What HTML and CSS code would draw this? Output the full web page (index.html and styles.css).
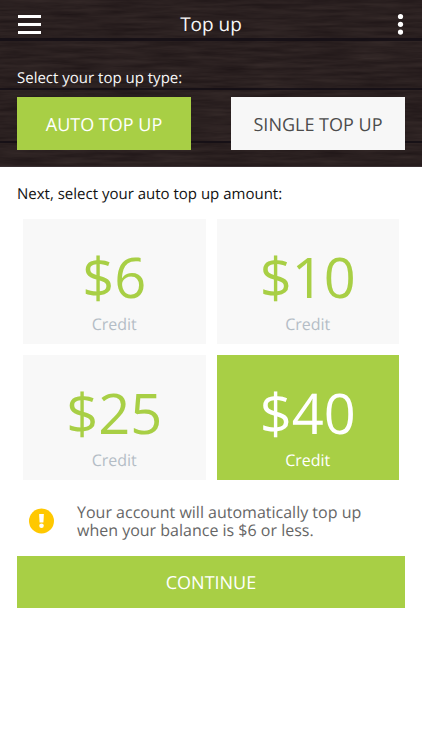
FILE: index.html
```html
<!DOCTYPE html>
<html lang="en">
<head>
<meta charset="utf-8">
<meta name="viewport" content="width=device-width, initial-scale=1">
<title>Top up</title>
<link rel="stylesheet" href="styles.css">
</head>
<body>
<header class="hero">
  <svg class="wood" aria-hidden="true" preserveAspectRatio="none">
    <filter id="grain" x="0" y="0" width="100%" height="100%" color-interpolation-filters="sRGB">
      <feTurbulence type="fractalNoise" baseFrequency="0.02 0.25" numOctaves="4" seed="8"/>
      <feColorMatrix type="matrix" values="0.1 0 0 0 0.115  0.09 0 0 0 0.08  0.08 0 0 0 0.085  0 0 0 0 1"/>
    </filter>
    <rect width="100%" height="100%" filter="url(#grain)"/>
    <g class="seams">
      <rect y="38" width="100%" height="3"/>
      <rect y="88" width="100%" height="2"/>
      <rect y="141" width="100%" height="2"/>
    </g>
  </svg>
  <div class="bar">
    <button class="icon-button" type="button" aria-label="Menu">
      <svg width="24" height="20" viewBox="0 0 24 20" fill="#fff"><path d="M1 1h23v3H1zM1 9h23v3H1zM1 17h23v3H1z"/></svg>
    </button>
    <h1 class="title">Top up</h1>
    <button class="icon-button more" type="button" aria-label="More options">
      <svg width="8" height="22" viewBox="0 0 8 22" fill="#fff"><circle cx="3.500" cy="3.500" r="2.600"/><circle cx="3.500" cy="11.300" r="2.600"/><circle cx="3.500" cy="19.100" r="2.600"/></svg>
    </button>
  </div>
  <p class="label">Select your top up type:</p>
  <div class="types">
    <button class="button selected" type="button" aria-pressed="true">AUTO TOP UP</button>
    <button class="button" type="button" aria-pressed="false">SINGLE TOP UP</button>
  </div>
</header>
<main class="content">
  <p class="label">Next, select your auto top up amount:</p>
  <div class="amounts">
    <button class="amount" type="button" aria-pressed="false"><span class="value">$6</span><span class="unit">Credit</span></button>
    <button class="amount" type="button" aria-pressed="false"><span class="value">$10</span><span class="unit">Credit</span></button>
    <button class="amount" type="button" aria-pressed="false"><span class="value">$25</span><span class="unit">Credit</span></button>
    <button class="amount selected" type="button" aria-pressed="true"><span class="value">$40</span><span class="unit">Credit</span></button>
  </div>
  <div class="notice">
    <svg class="notice-icon" width="26" height="26" viewBox="0 0 26 26" aria-hidden="true"><circle cx="13.500" cy="13" r="12.500" fill="#ffc800"/><path d="M11.100 6h4.800l-.5 8.500h-3.800z" fill="#fff"/><circle cx="13.500" cy="17.800" r="2.300" fill="#fff"/></svg>
    <p class="notice-text">Your account will automatically top up when your balance is $6 or less.</p>
  </div>
  <button class="button selected continue" type="button">CONTINUE</button>
</main>
</body>
</html>
```
FILE: styles.css
```css
* {
  box-sizing: border-box;
}

body {
  margin: 0;
  background: #fff;
  color: #111;
  font-family: "Open Sans", "Noto Sans", sans-serif;
  text-rendering: geometricPrecision;
}

button {
  border: 0;
  padding: 0;
  font: inherit;
  text-rendering: inherit;
  cursor: pointer;
}

h1,
p {
  margin: 0;
}

.hero {
  position: relative;
  isolation: isolate;
  padding: 0 17px 16px;
  border-bottom: 1px solid #3a3033;
  background: #2a1f20;
  color: #f7f7f7;
}

.wood {
  position: absolute;
  inset: 0;
  z-index: -1;
  width: 100%;
  height: 100%;
}

.seams {
  fill: #120d14;
  opacity: 0.8;
}

.bar {
  display: grid;
  grid-template-columns: 24px 1fr 24px;
  align-items: center;
  height: 48px;
}

.icon-button {
  display: flex;
  background: none;
}

.more {
  justify-content: center;
  padding-left: 15px;
}

.title {
  font-size: 19px;
  font-weight: 400;
  line-height: 24px;
  text-align: center;
}

.label {
  font-size: 15px;
  line-height: 20px;
}

.hero .label {
  margin: 20px 0 9px;
}

.types {
  display: grid;
  grid-template-columns: 1fr 1fr;
  gap: 40px;
}

.button {
  height: 53px;
  padding-top: 2px;
  background: #f7f7f7;
  color: #4c4c4c;
  font-size: 18px;
  line-height: 24px;
}

.selected {
  background: #a8cf45;
  color: #fff;
}

.content {
  padding: 17px;
}

.amounts {
  display: grid;
  grid-template-columns: 1fr 1fr;
  gap: 11px;
  padding: 15px 6px 0;
}

.amount {
  display: flex;
  flex-direction: column;
  align-items: center;
  gap: 3px;
  height: 125px;
  padding-top: 26px;
  background: #f8f8f8;
}

.value {
  color: #a8cf45;
  font-size: 56px;
  line-height: 64px;
}

.unit {
  color: #b4bdc6;
  font-size: 16px;
  line-height: 24px;
}

.amount.selected {
  background: #a8cf45;
}

.selected .value,
.selected .unit {
  color: #fff;
}

.notice {
  display: flex;
  align-items: center;
  gap: 23px;
  padding: 23px 11px 17px;
}

.notice-icon {
  flex: none;
}

.notice-text {
  max-width: 300px;
  color: #666;
  font-size: 16px;
  line-height: 18px;
}

.continue {
  width: 100%;
  height: 52px;
}
```
